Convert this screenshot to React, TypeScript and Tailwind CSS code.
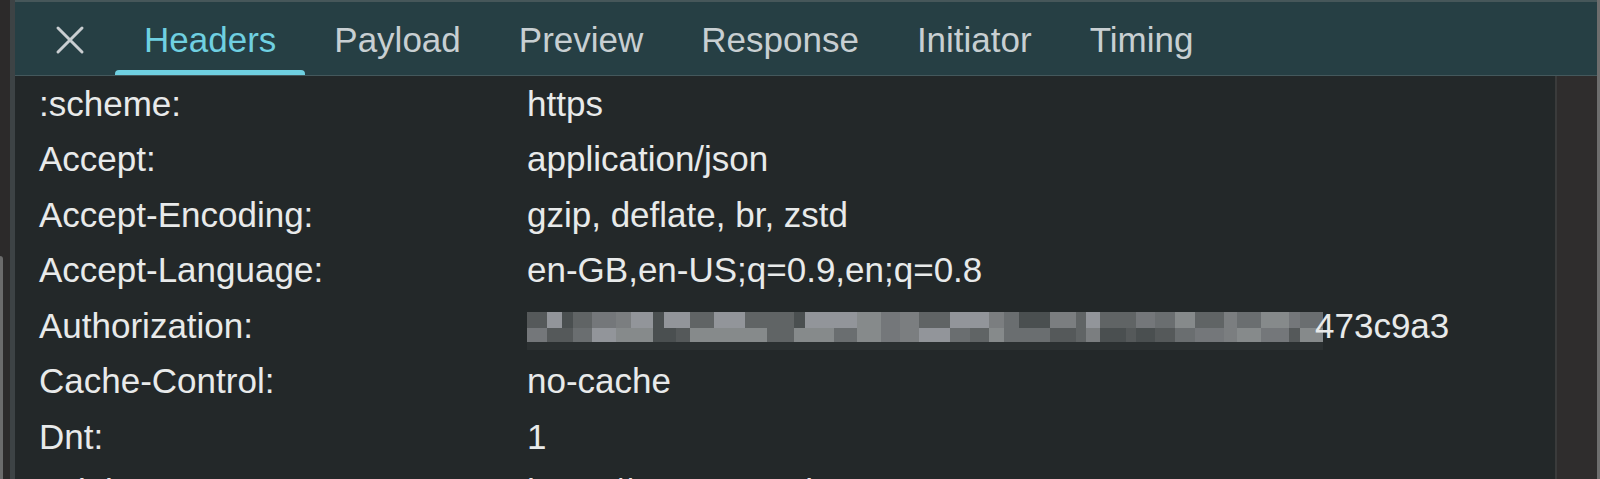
import { useMemo } from 'react';

const tabs = ['Headers', 'Payload', 'Preview', 'Response', 'Initiator', 'Timing'];

const headers: [string, string][] = [
  [':scheme:', 'https'],
  ['Accept:', 'application/json'],
  ['Accept-Encoding:', 'gzip, deflate, br, zstd'],
  ['Accept-Language:', 'en-GB,en-US;q=0.9,en;q=0.8'],
  ['Authorization:', '__REDACTED__'],
  ['Cache-Control:', 'no-cache'],
  ['Dnt:', '1'],
  ['Origin:', 'https://app.example.com'],
];

function Mosaic() {
  // pixelated blur over the token
  const cells = useMemo(() => {
    const out: { x: number; y: number; w: number; h: number; c: string }[] = [];
    const greys = ['#74777a', '#868a8b', '#606465', '#92959a', '#55595a', '#7b7e80', '#6a6e70', '#4a4f50'];
    let seed = 7;
    const rnd = () => {
      seed = (seed * 9301 + 49297) % 233280;
      return seed / 233280;
    };
    let x = 0;
    while (x < 796) {
      const w = 10 + Math.floor(rnd() * 22);
      out.push({ x, y: 0, w, h: 16, c: greys[Math.floor(rnd() * greys.length)] });
      out.push({ x, y: 16, w, h: 14, c: greys[Math.floor(rnd() * greys.length)] });
      out.push({ x, y: 30, w, h: 8, c: '#2b3031' });
      x += w;
    }
    return out;
  }, []);
  return (
    <svg width="796" height="38" viewBox="0 0 796 38" className="shrink-0">
      {cells.map((r, i) => (
        <rect key={i} x={r.x} y={r.y} width={r.w} height={r.h} fill={r.c} />
      ))}
    </svg>
  );
}

export default function App() {
  return (
    <div className="flex h-[479px] w-[1600px] overflow-hidden bg-[#232829] font-['Liberation_Sans',Arial,sans-serif] text-[35px] text-[#e8eaea]">
      <div className="flex w-[10px] flex-col bg-[#2c2a2a]">
        <div className="h-[256px]" />
        <div className="w-[3px] flex-1 rounded-tr-[3px] bg-[#6b6b6b]" />
      </div>
      <div className="w-[5px] bg-[#3d4345]" />

      <div className="flex min-w-0 flex-1 flex-col">
        <div className="flex h-[76px] shrink-0 items-stretch border-t-2 border-b border-t-[#46575a] border-b-[#44585c] bg-[#263f44]">
          <div className="flex w-[100px] items-center justify-center pl-[10px] pt-[2px]">
            <svg width="30" height="30" viewBox="0 0 30 30" fill="none" stroke="#c9ced1" strokeWidth="3" strokeLinecap="round">
              <path d="M3 3 L27 27 M27 3 L3 27" />
            </svg>
          </div>
          {tabs.map((t, i) => (
            <div key={t} className="flex flex-col">
              <div className={`flex flex-1 items-center px-[29px] pt-[8px] ${i === 0 ? 'text-[#6fd0e1]' : 'text-[#c8cfd2]'}`}>{t}</div>
              <div className={`h-[5px] rounded-t-[4px] ${i === 0 ? 'bg-[#6fd0e1]' : ''}`} />
            </div>
          ))}
        </div>

        <div className="flex min-h-0 flex-1">
          <div className="flex-1 pl-[24px]">
            {headers.map(([k, v]) => (
              <div key={k} className="flex h-[55.5px] items-center whitespace-nowrap">
                <div className="w-[488px] shrink-0">{k}</div>
                {v === '__REDACTED__' ? (
                  <div className="flex items-center pt-[10px]">
                    <Mosaic />
                    <span className="-ml-[8px] pb-[10px]">473c9a3</span>
                  </div>
                ) : (
                  <div>{v}</div>
                )}
              </div>
            ))}
          </div>
          <div className="w-[42px] shrink-0 border-l-2 border-[#3a3b3b] bg-[#2f2d2d]" />
        </div>
      </div>

      <div className="w-[3px] bg-[#6d6d6d]" />
    </div>
  );
}
